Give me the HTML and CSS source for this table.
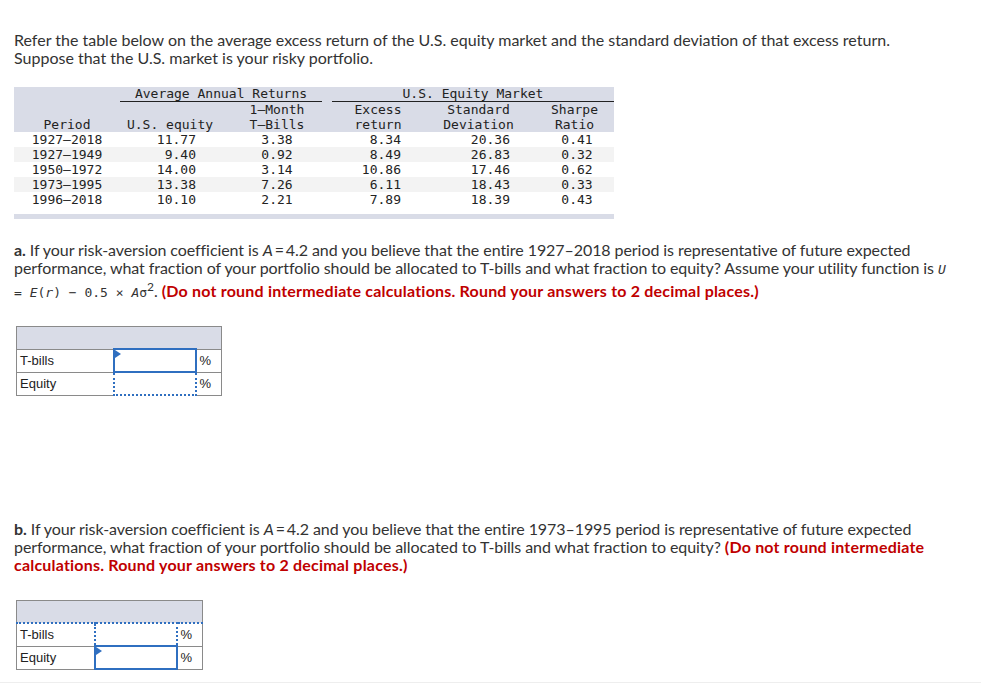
FILE: index.html
```html
<!DOCTYPE html>
<html>
<head>
<meta charset="utf-8">
<link rel="stylesheet" href="styles.css">
</head>
<body>
<div class="page">
  <p class="intro">Refer the table below on the average excess return of the U.S. equity market and the standard deviation of that excess return.<br>Suppose that the U.S. market is your risky portfolio.</p>

  <div class="data-wrap">
    <table class="data">
      <colgroup>
        <col class="c1"><col class="c2"><col class="c3"><col class="c4"><col class="c5"><col class="c6">
      </colgroup>
      <thead>
        <tr class="h1">
          <th></th>
          <th colspan="2"><div class="ul ul-left">Average Annual Returns</div></th>
          <th colspan="3"><div class="ul ul-right">U.S. Equity Market</div></th>
        </tr>
        <tr>
          <th></th><th></th><th>1–Month</th><th>Excess</th><th>Standard</th><th>Sharpe</th>
        </tr>
        <tr>
          <th>Period</th><th>U.S. equity</th><th>T–Bills</th><th>return</th><th>Deviation</th><th>Ratio</th>
        </tr>
      </thead>
      <tbody>
        <tr><td>1927–2018</td><td class="r2">11.77</td><td>3.38</td><td class="r4">8.34</td><td class="r5">20.36</td><td class="r6">0.41</td></tr>
        <tr class="alt"><td>1927–1949</td><td class="r2">9.40</td><td>0.92</td><td class="r4">8.49</td><td class="r5">26.83</td><td class="r6">0.32</td></tr>
        <tr><td>1950–1972</td><td class="r2">14.00</td><td>3.14</td><td class="r4">10.86</td><td class="r5">17.46</td><td class="r6">0.62</td></tr>
        <tr class="alt"><td>1973–1995</td><td class="r2">13.38</td><td>7.26</td><td class="r4">6.11</td><td class="r5">18.43</td><td class="r6">0.33</td></tr>
        <tr><td>1996–2018</td><td class="r2">10.10</td><td>2.21</td><td class="r4">7.89</td><td class="r5">18.39</td><td class="r6">0.43</td></tr>
      </tbody>
    </table>
    <div class="data-foot"></div>
  </div>

  <p class="question qa"><b>a.</b> If your risk-aversion coefficient is <i>A</i>&#8201;=&#8201;4.2 and you believe that the entire 1927–2018 period is representative of future expected<br>performance, what fraction of your portfolio should be allocated to T-bills and what fraction to equity? Assume your utility function is <span class="mono"><i>U</i></span><br><span class="formula"><span class="mono">= <i>E</i>(<i>r</i>) − 0.5 × <i>A</i>σ</span><sup>2</sup>.</span> <span class="warn">(Do not round intermediate calculations. Round your answers to 2 decimal places.)</span></p>

  <table class="answer answer-a">
    <colgroup><col class="lab-a"><col class="inp"><col class="pct"></colgroup>
    <tbody>
      <tr><td class="head-cell" colspan="3"></td></tr>
      <tr><td class="lab">T-bills</td><td class="in active"></td><td class="unit">%</td></tr>
      <tr><td class="lab">Equity</td><td class="in dotted"></td><td class="unit">%</td></tr>
    </tbody>
  </table>

  <p class="question qb"><b>b.</b> If your risk-aversion coefficient is <i>A</i>&#8201;=&#8201;4.2 and you believe that the entire 1973–1995 period is representative of future expected<br>performance, what fraction of your portfolio should be allocated to T-bills and what fraction to equity? <span class="warn">(Do not round intermediate<br>calculations. Round your answers to 2 decimal places.)</span></p>

  <table class="answer answer-b">
    <colgroup><col class="lab-b"><col class="inp"><col class="pct"></colgroup>
    <tbody>
      <tr><td class="head-cell" colspan="3"></td></tr>
      <tr class="dot-top"><td class="lab">T-bills</td><td class="in dotted"></td><td class="unit">%</td></tr>
      <tr><td class="lab">Equity</td><td class="in active"></td><td class="unit">%</td></tr>
    </tbody>
  </table>
  <div class="foot-line"></div>
</div>
</body>
</html>
```

FILE: styles.css
```css
html, body {
  margin: 0;
  padding: 0;
  background: #ffffff;
}

.page {
  padding: 31px 14px 0 14px;
  font-family: Lato, "Open Sans", sans-serif;
  font-size: 16px;
  color: #333333;
}

.intro {
  margin: 0;
  line-height: 18px;
}

.data-wrap {
  margin-top: 20px;
  width: 600px;
}

.data {
  border-collapse: collapse;
  table-layout: fixed;
  width: 600px;
  font-family: "DejaVu Sans Mono", monospace;
  font-size: 13px;
  color: #222222;
}

.data col.c1 { width: 106px; }
.data col.c2 { width: 100px; }
.data col.c3 { width: 114px; }
.data col.c4 { width: 88px; }
.data col.c5 { width: 113px; }
.data col.c6 { width: 79px; }

.data th,
.data td {
  padding: 0;
  font-weight: normal;
  text-align: center;
  line-height: 15px;
  height: 15px;
  white-space: nowrap;
}

.data thead {
  background: #d9dce7;
}

.data tr.h1 th {
  line-height: 14px;
  height: 15px;
  vertical-align: top;
}

.ul {
  border-bottom: 1px solid #222222;
  line-height: 14px;
}

.ul-left { margin-right: 12px; }
.ul-right { margin-left: -2px; }

.data tbody tr.alt { background: #f3f3f3; }

.data td.r2 { text-align: right; padding-right: 24px; }
.data td.r4 { text-align: right; padding-right: 21px; }
.data td.r5 { text-align: right; padding-right: 25px; }
.data td.r6 { padding-left: 5px; }

.data-foot {
  height: 5px;
  margin-top: 7px;
  background: #d9dce7;
}

.question {
  margin: 0;
  line-height: 18px;
  letter-spacing: -0.07px;
}

.qa { margin-top: 22px; }
.qb { margin-top: 124px; }

.formula {
  display: inline-block;
  line-height: 18px;
  padding-top: 3px;
}

.question sup {
  font-size: 12px;
  line-height: 0;
  vertical-align: 6px;
}

.mono {
  font-family: "DejaVu Sans Mono", monospace;
  font-size: 13px;
  letter-spacing: 0;
}

.warn {
  color: #c00000;
  font-weight: bold;
  letter-spacing: 0.2px;
}

.answer {
  border-collapse: collapse;
  table-layout: fixed;
  margin-left: 2px;
  font-family: "Liberation Sans", Arial, sans-serif;
  font-size: 13px;
  color: #222222;
}

.answer-a { width: 205px; margin-top: 24px; }
.answer-b { width: 186px; margin-top: 26px; }

.answer col.lab-a { width: 97px; }
.answer col.lab-b { width: 78px; }
.answer col.inp { width: 82px; }
.answer col.pct { width: 26px; }

.answer td {
  border: 1px solid #8a8a8a;
  height: 21px;
  padding: 0;
}

.answer td.head-cell {
  background-color: #d9dce7;
}

.answer td.lab { padding-left: 3px; }
.answer td.unit { padding-left: 3px; }

.answer td.in { position: relative; }

.answer td.active {
  border: 2px solid #2f6fc0;
}

.answer td.active::before {
  content: "";
  position: absolute;
  left: 0;
  top: 0;
  border-top: 4px solid transparent;
  border-bottom: 4px solid transparent;
  border-left: 6px solid #2f6fc0;
}

.answer td.dotted {
  border: 2px dotted #2f6fc0;
}

.answer tr.dot-top td {
  border-top: 2px dotted #2f6fc0;
}

.foot-line {
  margin: 12px -14px 0 -14px;
  border-top: 1px solid #eeeeee;
}
```
